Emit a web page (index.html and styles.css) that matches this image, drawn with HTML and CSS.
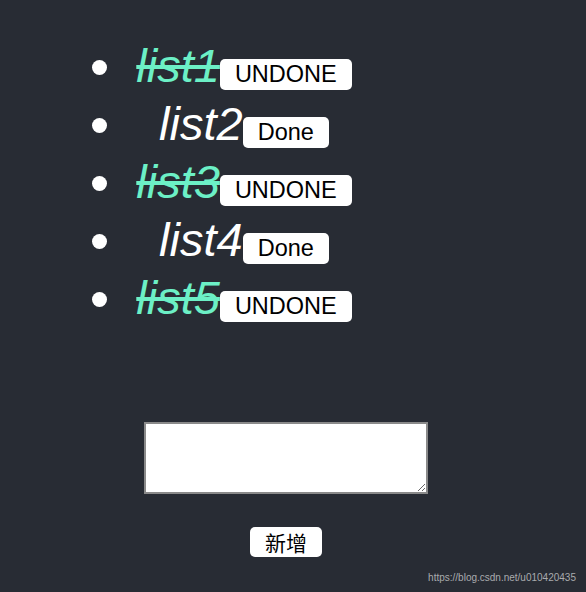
FILE: index.html
```html
<!DOCTYPE html>
<html lang="zh">
<head>
<meta charset="utf-8">
<title>Todo</title>
<link rel="stylesheet" href="styles.css">
</head>
<body>
<div class="app">
  <ul class="todo-list">
    <li class="item done"><span class="bullet"></span><div class="content"><span class="label">list1</span><button class="toggle">UNDONE</button></div></li>
    <li class="item"><span class="bullet"></span><div class="content"><span class="label">list2</span><button class="toggle">Done</button></div></li>
    <li class="item done"><span class="bullet"></span><div class="content"><span class="label">list3</span><button class="toggle">UNDONE</button></div></li>
    <li class="item"><span class="bullet"></span><div class="content"><span class="label">list4</span><button class="toggle">Done</button></div></li>
    <li class="item done"><span class="bullet"></span><div class="content"><span class="label">list5</span><button class="toggle">UNDONE</button></div></li>
  </ul>
  <div class="add-form">
    <textarea class="input"></textarea>
    <button class="add">新增</button>
  </div>
</div>
<div class="watermark">https://blog.csdn.net/u010420435</div>
</body>
</html>
```
FILE: styles.css
```css
html, body {
  margin: 0;
  height: 100%;
}
body {
  background: #282c34;
  font-family: "Liberation Sans", Arial, "Noto Sans CJK SC", sans-serif;
  position: relative;
  overflow: hidden;
}
.app {
  padding-top: 37px;
}
.todo-list {
  margin: 0;
  padding: 0 0 0 92px;
  list-style: none;
}
.item {
  display: flex;
  align-items: flex-start;
  gap: 13px;
  height: 58px;
}
.bullet {
  flex: none;
  width: 15px;
  height: 15px;
  margin-top: 23px;
  border-radius: 50%;
  background: #fff;
}
.content {
  width: 248px;
  font-size: 47px;
  font-style: italic;
  line-height: 58px;
  text-align: center;
  color: #fff;
  white-space: nowrap;
}
.item.done .label {
  color: #6cf0c6;
  text-decoration: line-through;
}
.toggle {
  font-family: "Liberation Sans", Arial, sans-serif;
  font-style: normal;
  font-size: 23.5px;
  line-height: 25px;
  padding: 3px 15px;
  border: none;
  border-radius: 5px;
  background: #fff;
  color: #000;
}
.add-form {
  width: 572px;
  margin-top: 95px;
  display: flex;
  flex-direction: column;
  align-items: center;
}
.input {
  width: 284px;
  height: 72px;
  box-sizing: border-box;
  border: 2px solid #8a8a8a;
  margin: 0;
  background: #fff;
}
.add {
  margin-top: 33px;
  font-family: "Noto Sans CJK SC", sans-serif;
  font-size: 21px;
  line-height: 24px;
  padding: 3px 15px;
  border: none;
  border-radius: 5px;
  background: #fff;
  color: #000;
}
.watermark {
  position: absolute;
  right: 10px;
  bottom: 9px;
  font-size: 10px;
  color: #a9abae;
  font-family: "Liberation Sans", Arial, sans-serif;
}
```
